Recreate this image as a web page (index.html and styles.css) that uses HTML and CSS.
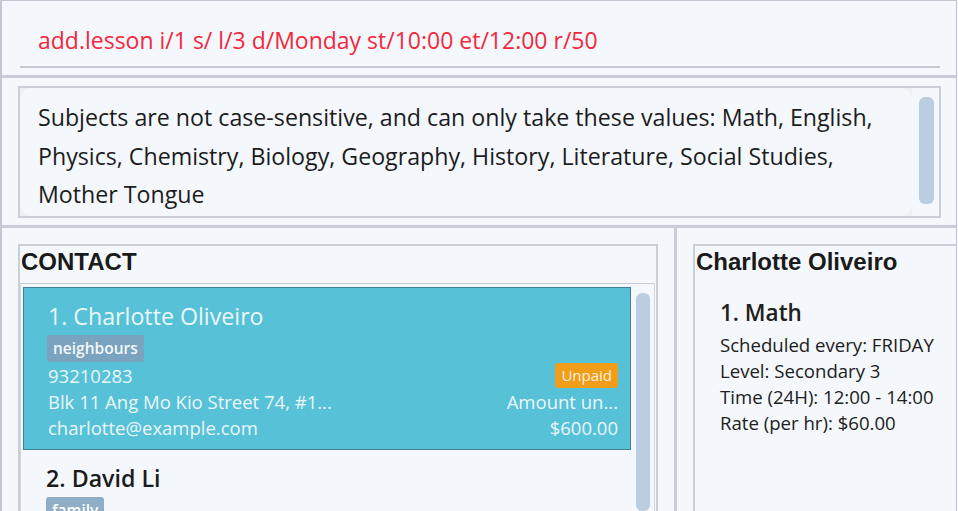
FILE: index.html
```html
<!DOCTYPE html>
<html lang="en">
<head>
<meta charset="utf-8">
<title>Tutor App</title>
<link rel="stylesheet" href="styles.css">
</head>
<body>
<div class="app">
  <section class="command">
    <div class="command-field">add.lesson i/1 s/ l/3 d/Monday st/10:00 et/12:00 r/50</div>
  </section>
  <section class="result">
    <div class="result-box">
      <div class="result-viewport">
        <div class="result-text">Subjects are not case-sensitive, and can only take these values: Math, English,<br>Physics, Chemistry, Biology, Geography, History, Literature, Social Studies,<br>Mother Tongue</div>
      </div>
      <div class="vscroll"><div class="thumb"></div></div>
    </div>
  </section>
  <section class="main">
    <div class="contacts-pane">
      <div class="panel">
        <h2 class="panel-title">CONTACT</h2>
        <div class="list">
          <div class="list-items">
            <div class="card selected">
              <div class="card-name">1. Charlotte Oliveiro</div>
              <div class="tags"><span class="tag">neighbours</span></div>
              <div class="card-info">
                <span class="info-left">93210283</span>
                <span class="info-right"><span class="badge">Unpaid</span></span>
                <span class="info-left">Blk 11 Ang Mo Kio Street 74, #1...</span>
                <span class="info-right">Amount un...</span>
                <span class="info-left">charlotte@example.com</span>
                <span class="info-right">$600.00</span>
              </div>
            </div>
            <div class="card">
              <div class="card-name">2. David Li</div>
              <div class="tags"><span class="tag">family</span></div>
            </div>
          </div>
          <div class="list-scroll"><div class="thumb"></div></div>
        </div>
      </div>
    </div>
    <div class="detail-pane">
      <div class="panel detail">
        <h2 class="panel-title">Charlotte Oliveiro</h2>
        <div class="lesson">
          <div class="lesson-title">1. Math</div>
          <div class="lesson-line">Scheduled every: FRIDAY</div>
          <div class="lesson-line">Level: Secondary 3</div>
          <div class="lesson-line">Time (24H): 12:00 - 14:00</div>
          <div class="lesson-line">Rate (per hr): $60.00</div>
        </div>
      </div>
    </div>
  </section>
</div>
</body>
</html>
```
FILE: styles.css
```css
* { box-sizing: border-box; }

html, body {
  margin: 0;
  padding: 0;
  background: #f4f8fc;
}

body {
  font-family: "Open Sans", "Noto Sans", sans-serif;
  color: #1c1c1c;
}

.app {
  width: 957px;
  height: 511px;
  border-left: 2px solid #c3c6d3;
  border-top: 1px solid #c3c6d3;
  border-right: 1px solid #c3c6d3;
  display: flex;
  flex-direction: column;
  overflow: hidden;
  background: #f4f8fc;
}

/* command box */
.command {
  flex: none;
  padding: 23px 16px 7px 18px;
  border-bottom: 3px solid #cacdd9;
}

.command-field {
  padding: 0 0 10px 18px;
  font-size: 23px;
  line-height: 32px;
  color: #f2283c;
  border-bottom: 2px solid #c6c9d5;
  white-space: nowrap;
}

/* result display */
.result {
  flex: none;
  padding: 8px 15px 7px 16px;
  border-bottom: 3px solid #cacdd9;
}

.result-box {
  height: 132px;
  border: 2px solid #cbcdd9;
  display: flex;
  background: #f4f8fc;
}

.result-viewport {
  flex: 1;
  background: #eeeff1;
}

.result-text {
  height: 100%;
  padding: 10px 0 0 18px;
  font-size: 23.2px;
  line-height: 38.5px;
  color: #1c1c1c;
  background: #f4f8fc;
  border-radius: 12px;
  white-space: nowrap;
}

.vscroll {
  width: 27px;
  flex: none;
  padding: 9px 5px 12px 7px;
}

.thumb {
  height: 100%;
  background: #b9cee0;
  border-radius: 6px;
}

/* main area */
.main {
  flex: 1;
  display: flex;
  min-height: 0;
}

.contacts-pane {
  width: 675px;
  flex: none;
  padding: 16px 16px 0 16px;
  border-right: 3px solid #cacdd9;
}

.panel {
  height: 100%;
  border: 2px solid #cbcdd9;
  border-bottom: none;
  display: flex;
  flex-direction: column;
}

.panel-title {
  margin: 0;
  height: 37px;
  padding-left: 1px;
  font-family: "Liberation Sans", Arial, sans-serif;
  font-weight: bold;
  font-size: 24px;
  line-height: 32px;
  color: #1a1a1a;
  white-space: nowrap;
}

.list {
  flex: 1;
  margin-right: 1px;
  border-top: 1px solid #c8cad8;
  border-left: 1px solid #d3d5df;
  border-right: 1px solid #d3d5df;
  display: flex;
  min-height: 0;
}

.list-items {
  flex: 1;
  padding: 3px 0 0 2px;
}

.list-scroll {
  width: 23px;
  flex: none;
  padding: 9px 4px 0 5px;
}

.card {
  padding: 13px 12px 8px 23px;
  color: #1b1b1b;
}

.card.selected {
  padding-left: 24px;
  background: #56c1d7;
  border: 1px solid #3f8199;
  color: #eaf7fb;
}

.card-name {
  font-size: 23.2px;
  line-height: 30px;
  font-weight: 600;
  white-space: nowrap;
}

.card.selected .card-name {
  font-weight: 400;
}

.tags {
  margin-top: 4px;
  display: flex;
}

.tag {
  height: 27px;
  padding: 0 6px;
  line-height: 27px;
  font-size: 15.5px;
  font-weight: 600;
  color: #ffffff;
  background: #8eaec7;
  border-radius: 3px;
}

.card.selected .tag {
  margin-left: -1px;
  background: #79a3be;
  color: #f2f8fb;
}

.card-info {
  margin-top: 1px;
  display: grid;
  grid-template-columns: 1fr auto;
  grid-auto-rows: 26px;
  font-size: 18.5px;
  line-height: 26px;
}

.info-left {
  white-space: nowrap;
}

.info-right {
  text-align: right;
  white-space: nowrap;
}

.badge {
  display: inline-block;
  height: 25px;
  padding: 0 6px;
  line-height: 25px;
  font-size: 15px;
  color: #fdf0d8;
  background: #f09d1a;
  border-radius: 3px;
  vertical-align: top;
}

/* detail pane */
.detail-pane {
  flex: 1;
  padding: 16px 0 0 16px;
}

.detail {
  border-right: none;
}

.lesson {
  padding: 15px 0 0 25px;
  color: #202020;
}

.lesson-title {
  font-size: 22.5px;
  line-height: 30px;
  font-weight: 600;
  margin-bottom: 4px;
}

.lesson-line {
  font-size: 18.6px;
  line-height: 26px;
  white-space: nowrap;
}
```
